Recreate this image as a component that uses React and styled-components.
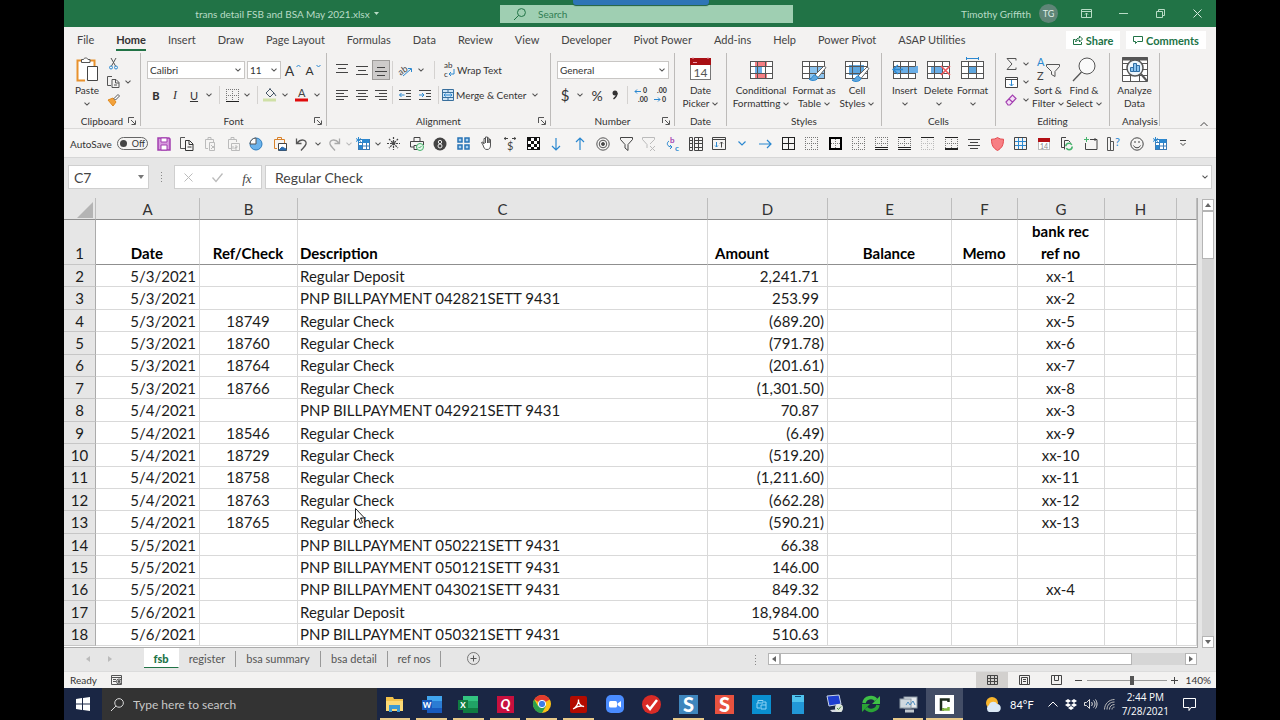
import React from "react";
import styled, { createGlobalStyle } from "styled-components";

const ui = 'Lato, "Open Sans", sans-serif';
const sheet = 'Lato, "Open Sans", sans-serif';

const Global = createGlobalStyle`
  * { box-sizing: border-box; }
  body { margin: 0; background: #000; font-family: ${ui}; color: #333; }
  button, input, select { font: inherit; color: inherit; margin: 0; padding: 0; border: 0; background: none; border-radius: 0; outline: 0; }
  svg { display: block; flex: none; overflow: visible; }
`;

const Screen = styled.div`
  height: 100vh;
  min-height: 640px;
  padding: 0 5%;
  background: #000;
`;
const Desktop = styled.div`
  height: 100%;
  display: flex;
  flex-direction: column;
  background: #e6e6e6;
  overflow: hidden;
  position: relative;
`;

/* ---------- title bar ---------- */
const TitleBar = styled.header`
  flex: none;
  height: 27px;
  display: grid;
  grid-template-columns: 436fr 293fr 423fr;
  align-items: center;
  background: #217346;
  color: #b9dcc6;
  font-size: 10px;
`;
const FileName = styled.div`
  display: flex;
  align-items: center;
  justify-content: center;
  gap: 4px;
  padding-left: 10px;
  white-space: nowrap;
`;
const SearchBox = styled.label`
  display: flex;
  align-items: center;
  gap: 12px;
  height: 18px;
  padding-left: 14px;
  background: #9fcfb2;
  color: #217346;
  input { flex: 1; min-width: 0; }
  input::placeholder { color: #2f7d53; opacity: 1; }
`;
const ShareTab = styled.div`
  position: absolute;
  top: 0;
  left: 50%;
  width: 136px;
  height: 5px;
  margin-left: -67px;
  background: #2e75b6;
  border-radius: 0 0 3px 3px;
  box-shadow: 0 1px 1px #1d5c3c;
`;
const Account = styled.div`
  display: flex;
  align-items: center;
  justify-content: flex-end;
`;
const Avatar = styled.span`
  width: 19px;
  height: 19px;
  margin: 0 10px 0 8px;
  border-radius: 50%;
  background: #5f8577;
  color: #dfeee6;
  font-size: 9px;
  line-height: 19px;
  text-align: center;
`;
const WindowButton = styled.button`
  width: 37px;
  height: 27px;
  display: flex;
  align-items: center;
  justify-content: center;
`;

/* ---------- ribbon ---------- */
const TabStrip = styled.nav`
  flex: none;
  height: 26px;
  display: flex;
  align-items: center;
  padding: 0 10px 0 13px;
  background: #f3f2f1;
  font-size: 11px;
`;
const Tabs = styled.div`
  display: flex;
  gap: 22px;
  flex: 1;
`;
const Tab = styled.button`
  height: 22px;
  white-space: nowrap;
  border-bottom: 2px solid ${(p) => (p.$on ? "#217346" : "transparent")};
  font-weight: ${(p) => (p.$on ? 700 : 400)};
  color: ${(p) => (p.$on ? "#333" : "#444")};
`;
const PillButton = styled.button`
  height: 18px;
  width: ${(p) => p.$w}px;
  margin-left: 6px;
  display: flex;
  align-items: center;
  justify-content: center;
  gap: 3px;
  background: #fff;
  color: #217346;
  font-weight: 700;
  font-size: 11px;
`;
const Ribbon = styled.section`
  flex: none;
  height: 76px;
  display: flex;
  background: #f3f2f1;
  border-bottom: 1px solid #dad9d8;
  font-size: 10px;
`;
const Group = styled.div`
  width: ${(p) => p.$w}px;
  height: 73px;
  flex: none;
  display: flex;
  flex-direction: column;
  border-right: 1px solid #bdbbb9;
`;
const GroupBody = styled.div`
  flex: 1;
  display: flex;
  padding: 2px ${(p) => p.$px || 0}px 0;
  justify-content: ${(p) => p.$justify || "flex-start"};
`;
const GroupFoot = styled.div`
  height: 12px;
  flex: none;
  display: grid;
  grid-template-columns: 12px 1fr 12px;
  align-items: center;
  text-align: center;
  font-size: 10px;
  line-height: 12px;
  margin-bottom: -1px;
  span { grid-column: 2; white-space: nowrap; justify-self: center; }
`;
const Rows = styled.div`
  display: flex;
  flex-direction: column;
  gap: 5px;
  padding-top: 5px;
`;
const ToolRow = styled.div`
  height: 20px;
  display: flex;
  align-items: center;
`;
const Tool = styled.button`
  width: ${(p) => (p.$w ? p.$w + "px" : "auto")};
  height: ${(p) => p.$h || 20}px;
  flex: none;
  display: flex;
  align-items: center;
  justify-content: center;
  gap: 2px;
  white-space: nowrap;
  background: ${(p) => (p.$on ? "#cdcbca" : "none")};
  box-shadow: ${(p) => (p.$on ? "inset 0 0 0 1px #9d9b99" : "none")};
`;
const Glyph = styled.span`
  font-size: ${(p) => p.$size || 12}px;
  font-weight: ${(p) => p.$weight || 400};
  font-style: ${(p) => (p.$italic ? "italic" : "normal")};
  text-decoration: ${(p) => (p.$under ? "underline" : "none")};
  font-family: ${(p) => (p.$serif ? '"Liberation Serif", serif' : "inherit")};
`;
const Rule = styled.span`
  width: 1px;
  height: 18px;
  background: #d4d2d0;
  flex: none;
  margin: 0 ${(p) => p.$m || 0}px;
`;
const Picker = styled.span`
  width: ${(p) => p.$w}px;
  height: 18px;
  margin-right: 2px;
  display: flex;
  align-items: center;
  background: #fff;
  border: 1px solid #c8c6c4;
  padding-right: 3px;
  flex: none;
  select { appearance: none; flex: 1; min-width: 0; padding-left: 2px; height: 16px; color: #333; }
`;
const BigTool = styled.button`
  width: ${(p) => p.$w}px;
  flex: none;
  display: flex;
  flex-direction: column;
  align-items: center;
  padding-top: 2px;
  line-height: 13px;
  white-space: nowrap;
  i { font-style: normal; display: flex; align-items: center; gap: 3px; height: 13px; }
  svg.art { height: 26px; margin-bottom: 1px; }
`;
const Stack = styled.div`
  display: flex;
  flex-direction: column;
  ${ToolRow} { height: 18px; }
`;
const Collapse = styled.button`
  margin: auto 8px 1px auto;
`;

/* ---------- quick access ---------- */
const QuickBar = styled.section`
  flex: none;
  height: 29px;
  display: flex;
  align-items: center;
  background: #f5f4f3;
  border-bottom: 1px solid #d6d6d6;
  padding: 1px 21px 0 6px;
`;
const AutoSave = styled.label`
  width: 82px;
  flex: none;
  display: flex;
  align-items: center;
  gap: 5px;
  font-size: 10px;
  white-space: nowrap;
`;
const Switch = styled.span`
  width: 31px;
  height: 13px;
  border: 1px solid #666;
  border-radius: 7px;
  display: flex;
  align-items: center;
  gap: 5px;
  padding-left: 2px;
  font-size: 9px;
  flex: none;
  input { appearance: none; width: 7px; height: 7px; border-radius: 50%; background: #444; }
`;
const QuickSet = styled.div`
  flex: ${(p) => p.$grow} 1 0;
  display: grid;
  grid-template-columns: repeat(${(p) => p.$n}, 1fr);
  justify-items: center;
`;
const QuickSplit = styled.div`
  width: 91px;
  flex: none;
  display: flex;
  align-items: center;
  gap: 2px;
  padding-left: 1px;
`;

/* ---------- formula bar ---------- */
const FormulaRow = styled.section`
  flex: none;
  display: flex;
  height: 40px;
  padding: 7px 4px 9px;
  color: #444;
`;
const NameBox = styled.div`
  width: 81px;
  flex: none;
  display: flex;
  align-items: center;
  padding: 0 5px;
  background: #fff;
  border: 1px solid #cfcfcf;
  font: 14px ${sheet};
  input { width: 64px; }
`;
const Dots = styled.div`
  width: ${(p) => p.$w}px;
  height: ${(p) => p.$h || 24}px;
  display: flex;
  flex-direction: column;
  align-items: center;
  justify-content: center;
  gap: 2px;
  i { width: 1px; height: 1px; background: #888; }
`;
const FxBox = styled.div`
  width: 88px;
  flex: none;
  margin-right: 3px;
  display: flex;
  align-items: center;
  justify-content: space-around;
  background: #fff;
  border: 1px solid #cfcfcf;
`;
const FormulaBox = styled.div`
  flex: 1;
  display: flex;
  align-items: center;
  padding: 0 3px 0 9px;
  background: #fff;
  border: 1px solid #cfcfcf;
  font: 14px ${sheet};
  input { flex: 1; }
`;

/* ---------- grid ---------- */
const SheetArea = styled.main`
  flex: 1;
  min-height: 0;
  display: flex;
  position: relative;
`;
const GridWrap = styled.div`
  flex: 1;
  min-width: 0;
  padding-bottom: 1px;
  background: #fff;
  border-right: 1px solid #ababab;
  border-bottom: 1px solid #ababab;
`;
const Grid = styled.table`
  width: 100%;
  height: 100%;
  table-layout: fixed;
  border-collapse: separate;
  border-spacing: 0;
  font: 15px/18px ${sheet};
  color: #1c1c1c;
  th, td { padding: 0 3px; border-right: 1px solid #d9d9d9; border-bottom: 1px solid #d9d9d9; white-space: nowrap; overflow: hidden; }
  th { font-weight: 400; }
`;
const HeadRow = styled.tr`
  height: 22px;
  th { background: #e6e6e6; border-color: #ababab #bdbdbd #8f8f8f; color: #333; }
`;
const TitleRow = styled.tr`
  height: 45px;
  td { font-weight: 700; color: #000; vertical-align: bottom; border-bottom-color: #8f8f8f; line-height: 22px; }
  th { vertical-align: bottom; line-height: 22px; }
`;
const RowHead = styled.th`
  background: #e6e6e6;
  border-right-color: #ababab !important;
  border-bottom-color: #c6c6c6 !important;
  text-align: center;
`;
const Cell = styled.td`
  text-align: ${(p) => p.$align || "left"};
  padding-right: ${(p) => (p.$positive ? 8 : 3)}px !important;
  padding-left: ${(p) => (p.$indent ? 7 : 2)}px !important;
`;
const Corner = styled.svg`
  margin: 2px 0 0 10px;
`;
const VScroll = styled.div`
  width: 18px;
  flex: none;
  padding: 1px 2px 0 4px;
  display: flex;
  flex-direction: column;
`;
const ScrollButton = styled.button`
  width: 12px;
  height: 12px;
  flex: none;
  display: flex;
  align-items: center;
  justify-content: center;
  background: #fff;
  border: 1px solid #b5b5b5;
`;
const Track = styled.div`
  flex: 1;
  background: #d6d6d6;
`;
const VThumb = styled.div`
  height: 48px;
  background: #fff;
  border: 1px solid #b5b5b5;
`;
const HThumb = styled.div`
  width: 87%;
  height: 12px;
  background: #fff;
  border: 1px solid #b5b5b5;
`;
const Pointer = styled.svg`
  position: absolute;
  left: 291px;
  top: 310px;
`;

/* ---------- sheet tabs and status ---------- */
const SheetTabs = styled.nav`
  flex: none;
  height: 23px;
  display: flex;
  align-items: flex-start;
  font-size: 11px;
`;
const NavArrows = styled.div`
  width: 80px;
  height: 22px;
  flex: none;
  display: flex;
  align-items: center;
  gap: 18px;
  padding-left: 22px;
`;
const SheetTab = styled.button`
  width: ${(p) => p.$w}px;
  height: ${(p) => (p.$on ? 20 : 16)}px;
  margin-top: ${(p) => (p.$on ? 0 : 3)}px;
  line-height: 16px;
  white-space: nowrap;
  color: ${(p) => (p.$on ? "#217346" : "#555")};
  font-weight: ${(p) => (p.$on ? 900 : 400)};
  background: ${(p) => (p.$on ? "#fff" : "none")};
  border-right: 1px solid ${(p) => (p.$plain ? "transparent" : "#999")};
  border-bottom: ${(p) => (p.$on ? "1px solid #217346" : "0")};
  padding-top: ${(p) => (p.$on ? 2 : 0)}px;
`;
const AddSheet = styled.button`
  margin: 4px 0 0 26px;
`;
const HScroll = styled.div`
  flex: 0 1 429px;
  display: flex;
  margin: 5px 19px 0 0;
`;
const StatusBar = styled.footer`
  flex: none;
  height: 17px;
  display: flex;
  align-items: center;
  background: #f3f2f1;
  border-top: 1px solid #dcdcdc;
  font-size: 10px;
  padding: 0 5px 0 6px;
`;
const MacroButton = styled.button`
  margin: 0 auto 0 14px;
`;
const ViewButton = styled.button`
  width: 32px;
  height: 16px;
  display: flex;
  align-items: center;
  justify-content: center;
  background: ${(p) => (p.$on ? "#d2d0ce" : "none")};
`;
const ZoomButton = styled.button`
  padding: 0 3px;
`;
const ZoomRange = styled.input`
  appearance: none;
  width: 80px;
  height: 12px;
  margin: 0 1px 0 2px;
  background: linear-gradient(#999, #999) center / 100% 1px no-repeat;
  &::-webkit-slider-thumb { appearance: none; width: 4px; height: 9px; background: #555; }
`;
const Percent = styled.span`
  width: 30px;
  text-align: right;
`;
const Spacer = styled.span`
  flex: 1;
`;

/* ---------- taskbar ---------- */
const Taskbar = styled.footer`
  flex: none;
  height: 32px;
  display: flex;
  background: #1a2644;
  color: #fff;
`;
const Start = styled.button`
  width: 38px;
  flex: none;
  display: flex;
  align-items: center;
  justify-content: center;
`;
const TaskSearch = styled.label`
  flex: 0 1 276px;
  display: flex;
  align-items: center;
  gap: 9px;
  padding-left: 9px;
  background: #333;
  color: #d0d0d0;
  font-size: 12px;
  input { flex: 1; min-width: 0; }
  input::placeholder { color: #c8c8c8; opacity: 1; }
`;
const Apps = styled.div`
  flex: 0 1 589px;
  display: grid;
  grid-template-columns: repeat(16, 1fr);
`;
const AppButton = styled.button`
  display: flex;
  align-items: center;
  justify-content: center;
  background: ${(p) => (p.$active ? "#434d66" : "none")};
  margin: 0 ${(p) => (p.$active ? 0 : 3)}px;
  box-shadow: ${(p) => (p.$open ? "inset 0 -2px #e8c98a" : "none")};
`;
const Tray = styled.div`
  flex: 1;
  display: flex;
  align-items: center;
  justify-content: flex-end;
  gap: 7px;
  padding: 0 20px 0 22px;
  font-size: 11px;
  white-space: nowrap;
`;
const Clock = styled.time`
  font: 10px/14px "Open Sans", sans-serif;
  text-align: center;
`;
const Notify = styled.button`
  margin-left: 7px;
`;

/* ---------- icons ---------- */
const K = "#555";
const B = "#2b88d0";
const Art = ({ w = 16, h = 16, big, children }) => (
  <svg className={big ? "art" : undefined} width={w} height={h} viewBox={`0 0 ${w} ${h}`} fill="none" stroke={K} strokeWidth="1" aria-hidden="true">
    {children}
  </svg>
);
const Chev = ({ color = K }) => (
  <Art w={6} h={4}><path d="M.5.7 3 3.1 5.5.7" stroke={color} strokeWidth="1.1" /></Art>
);
const Launcher = () => (
  <Art w={8} h={8}><path d="M.5 6V.5H6M3 3l4 4M7.500 3.500v4h-4" /></Art>
);
const Lines = ({ rows }) => (
  <Art w={12} h={12}>
    {rows.map(([x, y, x2], i) => <path key={i} d={`M${x} ${y}.5H${x2}`} stroke="#444" />)}
  </Art>
);
const Magnifier = ({ s = 12, color }) => (
  <Art w={s} h={s}>
    <circle cx={s * 0.62} cy={s * 0.38} r={s * 0.33} stroke={color} />
    <path d={`M${s * 0.38} ${s * 0.62} 0 ${s}`} stroke={color} />
  </Art>
);
const Indent = ({ right }) => (
  <Art w={12} h={12}>
    <path d="M0 1.500h12M7 4.500h5M7 7.500h5M0 10.500h12" stroke="#444" />
    <path d={right ? "M0 6h5M3 4l2 2-2 2" : "M.5 6h5M2.500 4l-2 2 2 2"} stroke={B} />
  </Art>
);
const Decimals = ({ more }) => (
  <Art w={13} h={14}>
    <g fill="#333" stroke="none" fontSize="7" fontWeight="700" fontFamily="Lato">
      <text x={more ? 8 : 3} y="5">{more ? "0" : ".00"}</text>
      <text x={more ? 3 : 8} y="14">{more ? ".00" : "0"}</text>
    </g>
    <path d={more ? "M0 3.500h6M2 1.500l-2 2 2 2" : "M0 11.500h6M4 9.500l2 2-2 2"} stroke={B} />
  </Art>
);
const Brush = ({ x, y }) => (
  <g transform={`translate(${x} ${y})`}>
    <path d="M15 0 6 9l3 2.500L17 1.500z" fill="#fff" stroke="#666" />
    <path d="M6 9c-3 0-2 4-6 4 3 3 9 1 9-1.500z" fill="#5ea6de" stroke={B} />
  </g>
);
const TableGrid = ({ w = 22, h = 17, y = 4, fill }) => (
  <g>
    <rect x=".5" y={y + 0.5} width={w} height={h} fill="#fff" />
    {fill}
    <path d={`M.5 ${y + 5}.5h${w}M.5 ${y + 12}.5h${w}M7.500 ${y}v${h}M15.500 ${y}v${h}`} />
  </g>
);
const BorderIcon = ({ solid, dash = "#777" }) => (
  <Art w={13} h={13}>
    <path d="M0 .500h13M0 6.500h13M0 12.500h13M.5 0v13M6.500 0v13M12.500 0v13" stroke={dash} strokeDasharray="1 1" />
    {solid && <path d={solid[0]} stroke={solid[2] || "#222"} strokeWidth={solid[1]} />}
  </Art>
);

const quickLeft = [
  ["Save", <Art w={14} h={14}><path d="M1 1h11l1 1v11H1z" stroke="#a33fb0" strokeWidth="1.500" fill="#d79ade" /><path d="M4 1h6v4H4zM4 13V8h6v5z" fill="#fff" stroke="#a33fb0" /></Art>],
  ["Copy", <Art w={14} h={14}><path d="M5 11.500H.5V.5H5" /><path d="M5.500 3.500h4l3.500 3.500v6.500H5.500zM9 3.500v4h4M7.500 10h4" stroke="#333" /></Art>],
  ["Paste formulas", <Art w={14} h={14}><path d="M5 11.500H2.500v-9h8V5M5 2.500v-2h3v2M6.500 5.500h5v8h-5zM8 8l4 4M12 8l-4 4" stroke="#bbb" /></Art>],
  ["Paste values", <Art w={14} h={14}><path d="M5 11.500H2.500v-9h8V5M5 2.500v-2h3v2M5.500 6.500h8v7h-8zM7 12V9M9 9h2v1.500H9V12h2" stroke="#bbb" /></Art>],
  ["Chart", <Art w={14} h={14}><circle cx="7" cy="7" r="6" fill="#6bb3ec" stroke="#2f7dbd" /><path d="M7 1v6H1a6 6 0 0 1 6-6z" fill="#fff" stroke="#555" /></Art>],
  ["Paste picture", <Art w={14} h={14}><path d="M4 11.500H1.500v-9h10V6M4.500 2.500v-2h4v2z" stroke="#d9822b" /><path d="M5.500 6.500h8v7h-8z" fill="#fff" stroke="#444" /><path d="M6 13l3-3 4 2v1z" fill="#2b6cb0" stroke="#2b6cb0" /></Art>],
];
const Undo = ({ flip, color }) => (
  <Art w={14} h={14}><g transform={flip ? "translate(14 0) scale(-1 1)" : undefined}><path d="M1.500 1.500v5h5M2 6c4-5 10-3 9 1-.5 2-3 4-5 6.500" stroke={color} strokeWidth="1.300" /></g></Art>
);
const BlueTable = () => (
  <Art w={14} h={13}>
    <rect x="2.500" y="2.500" width="11" height="10" fill="#fff" stroke="#3a7ab5" />
    <path d="M6.500 3v9M10.500 3v9M3 5.500h10M3 9h10" stroke="#3a7ab5" />
    <path d="M6 2h7v4H6zM3 8h3v4H3z" fill={B} stroke="none" /><path d="M2.500 0v6M0 1.500l5 3M5 1.500l-5 3" stroke={B} />
  </Art>
);
const quickRight = [
  ["Freeze", <Art w={13} h={13}><path d="M6.500 0v13M0 6.500h13M2 2l9 9M11 2l-9 9" strokeDasharray="2 1" strokeWidth="1.200" stroke="#444" /><circle cx="6.500" cy="6.500" r="1.500" fill="#444" /></Art>],
  ["Print", <Art w={14} h={14}><path d="M4 4V.5h6V4M4 10H.5V4.500h13V8M4 8.500h4v4H4z" stroke="#444" /><circle cx="10" cy="10" r="3.500" fill="#e6f6ea" stroke="#45b36b" /><path d="M8.500 10l1 1 2-2" stroke="#45b36b" /></Art>],
  ["Eight", <Art w={14} h={14}><circle cx="7" cy="7" r="6.500" fill="#444" stroke="none" /><circle cx="7" cy="5" r="1.700" stroke="#eee" /><circle cx="7" cy="9" r="2" stroke="#eee" /></Art>],
  ["Blocks", <Art w={13} h={13}><path d="M1 1h4v4H1zM8 1h4v4H8zM1 8h4v4H1zM8 8h4v4H8z" fill="#a9d2f2" stroke="#2773b5" strokeWidth="1.500" /></Art>],
  ["Hand", <Art w={13} h={15}><path d="M3 9 1.500 6.500 3 6l1 2V2.500h1.500V7 1h2v6-5h1.500v5V3.500h1.500V9c0 3-1 4.500-3.500 4.500S4 12 3 9z" fill="#fff" /></Art>],
  ["Currency swap", <Art w={14} h={14}><text x="4" y="13" fontSize="11" fill="#444" stroke="none" fontFamily="Lato">$</text><path d="M1 1.500h4M3 .5 1 1.500l2 1M9 1.500h4M11 .5l2 1-2 1" stroke="#444" /></Art>],
  ["Checker", <Art w={13} h={13}><rect x=".5" y=".5" width="12" height="12" fill="#fff" stroke="#111" /><path d="M1 1h3v3H1zM7 1h3v3H7zM4 4h3v3H4zM10 4h2v3h-2zM1 7h3v3H1zM7 7h3v3H7zM4 10h3v2H4zM10 10h2v2h-2z" fill="#111" stroke="none" /></Art>],
  ["Down", <Art w={10} h={14}><path d="M5 1v12M1 9l4 4 4-4" stroke={B} strokeWidth="1.200" /></Art>],
  ["Up", <Art w={10} h={14}><path d="M5 13V1M1 5l4-4 4 4" stroke={B} strokeWidth="1.200" /></Art>],
  ["Target", <Art w={14} h={14}><circle cx="7" cy="7" r="6.200" /><circle cx="7" cy="7" r="3.800" /><circle cx="7" cy="7" r="1.500" fill="#444" /></Art>],
  ["Filter", <Art w={13} h={14}><path d="M.5.5h12v2l-4.500 5v6L5 11V7.500l-4.500-5z" stroke="#444" /></Art>],
  ["Clear filter", <Art w={14} h={14}><path d="M.5.5h12v2L8 7M5 11V7.500l-4.500-5V.5M8 9l5 5M13 9l-5 5" stroke="#bbb" /></Art>],
  ["Replace", <Art w={14} h={14}><g fontSize="8" fontWeight="700" stroke="none" fontFamily="Lato"><text x="4" y="6" fill="#a33fb0">b</text><text x="9" y="14" fill={B}>c</text></g><path d="M3 4C0 6 1 10 6 10M4 8l2 2-2 2" stroke={B} /></Art>],
  ["Pivot", <Art w={14} h={14}><path d="M.5.500h3v13h-3zM5.500.500h8v13h-8zM9.500.500v13M5.500 3.500h8M5.500 6.500h8M5.500 10.500h8M1 3.500h2M1 6.500h2M1 10.500h2" stroke="#444" /></Art>],
  ["Sort window", <Art w={14} h={13}><path d="M.5.5h13v12H.5zM.5 2.500h13" stroke="#444" /><path d="M4.500 5v5M3 8.500l1.500 1.500L6 8.500" stroke={B} /><path d="M9.500 10.500V5M8 6.500 9.500 5 11 6.500" stroke="#444" /></Art>],
  ["Expand", <Art w={8} h={5}><path d="M.5.500 4 4 7.500.500" stroke={B} strokeWidth="1.200" /></Art>],
  ["Right", <Art w={13} h={10}><path d="M0 5h12M8 1l4 4-4 4" stroke={B} strokeWidth="1.200" /></Art>],
  ["All borders", <BorderIcon dash="none" solid={["M0 .500h13M0 6.500h13M0 12.500h13M.5 0v13M6.500 0v13M12.500 0v13", 1]} />],
  ["No border", <BorderIcon />],
  ["Thick box", <BorderIcon solid={["M1 1h11v11H1z", 2, "#000"]} />],
  ["Outside", <BorderIcon />],
  ["Bottom", <BorderIcon solid={["M0 12.500h13M0 10.500h13", 1]} />],
  ["Top and bottom", <BorderIcon solid={["M0 .500h13M0 12.500h13M0 10.500h13", 1]} />],
  ["Top", <BorderIcon dash="#bbb" solid={["M0 .500h13", 1]} />],
  ["Thick bottom", <BorderIcon solid={["M0 .500h13M0 12.500h13M0 11.500h13", 1]} />],
  ["Center", <Art w={12} h={12}><path d="M0 1.500h12M2 4.500h8M0 7.500h12M2 10.500h8" stroke="#444" /></Art>],
  ["Shield", <Art w={13} h={14}><path d="M6.500.5c2 1.500 4 1.700 6 1.700C12.500 8 11 11 6.500 13.500 2 11 .5 8 .5 2.200c2 0 4-.2 6-1.700z" fill="#f77f84" stroke="#e5484d" /></Art>],
  ["Grid", <Art w={13} h={13}><path d="M4.500 1v11M8.500 1v11M1 4.500h11M1 8.500h11" stroke={B} /><path d="M.5.500h12v12H.5z" stroke="#444" /></Art>],
  ["Calendar", <Art w={12} h={12}><rect x=".5" y=".5" width="11" height="11" fill="#fff" stroke="#bbb" /><path d="M0 2h12" stroke="#b30f14" strokeWidth="4" /><text x="2" y="11" fontSize="7" fill="#888" stroke="none" fontFamily="Lato">14</text></Art>],
  ["Refresh copy", <Art w={12} h={14}><path d="M3 10.500H.5v-10H5M3.500 12.500v-9h4l2 2" stroke="#444" /><circle cx="8" cy="9.500" r="3.200" stroke="#45b36b" strokeWidth="1.500" strokeDasharray="8 2" /></Art>],
  ["New window", <Art w={14} h={13}><path d="M6 2.500h7v10H1.500V6M11 1v3" stroke="#444" /><path d="M2.500 0v5M0 2.500h5" stroke="#45b36b" /></Art>],
  ["Chart help", <Art w={14} h={14}><path d="M.5.500h3v13h-3zM3.500 4.500h3v9h-3z" /><text x="8" y="9" fontSize="11" fill={B} stroke="none" fontFamily="Lato">?</text></Art>],
  ["Smile", <Art w={14} h={14}><circle cx="7" cy="7" r="6.200" stroke="#444" /><path d="M3.500 8.500c1.500 3 5.500 3 7 0M5 4v2M9 4v2" stroke="#444" /></Art>],
  ["Table tools", <BlueTable />],
  ["More", <Art w={8} h={7}><path d="M1 .5h6M1.500 3 4 5.500 6.500 3" stroke="#444" /></Art>],
];

const Tile = ({ fill, children }) => (
  <Art w={19} h={19}><rect width="19" height="19" fill={fill} stroke="none" />{children}</Art>
);
const Letter = ({ children, size = 16, x = 9.5, y = 15, fill = "#fff", italic }) => (
  <text x={x} y={y} fontSize={size} fontWeight="900" fontStyle={italic ? "italic" : undefined} textAnchor="middle" fill={fill} stroke="none" fontFamily="Lato">{children}</text>
);
const Office = ({ a, b, c, letter }) => (
  <Art w={20} h={17}>
    <rect x="5" width="15" height="17" fill={b} stroke="none" /><path d="M5 0h15v5H5z" fill={a} stroke="none" />
    <path d="M5 12h15v5H5z" fill={c} stroke="none" /><rect y="4" width="10" height="10" fill={c} stroke="none" />
    <Letter size={8} x={5} y={12}>{letter}</Letter>
  </Art>
);
const apps = [
  ["File Explorer", 1, <Art w={18} h={16}><path d="M0 1h7l1 2h9v12H0z" fill="#f2c14b" stroke="none" /><path d="M0 5h17v10H0z" fill="#fbd976" stroke="none" /><path d="M3 16V9h11v7h-3v-3H6v3z" fill="#3c9ad4" stroke="none" /></Art>],
  ["Word", 1, <Office a="#41a5ee" b="#2b7cd3" c="#185abd" letter="W" />],
  ["Excel", 1, <Office a="#33c481" b="#21a366" c="#107c41" letter="X" />],
  ["Quicken", 1, <Art w={17} h={17}><rect width="17" height="17" fill="#c8103e" stroke="none" /><Letter size={13} x={8.500} y={13} italic>Q</Letter></Art>],
  ["Chrome", 1, <Art w={18} h={18}><circle cx="9" cy="9" r="9" fill="#fbc116" stroke="none" /><path d="M9 9 1.200 4.500A9 9 0 0 1 16.800 4.500z" fill="#e33b2e" stroke="none" /><path d="M1.200 4.500A9 9 0 0 0 9 18l4-7H5z" fill="#2c9f4b" stroke="none" /><path d="M9 5h7.800l-.5-1H9z" fill="#e33b2e" stroke="none" /><circle cx="9" cy="9" r="3.700" fill="#3d7de8" stroke="#fff" /></Art>],
  ["Acrobat", 1, <Art w={17} h={17}><rect width="17" height="17" rx="2" fill="#b30b00" stroke="none" /><path d="M3 13c3-1 6-6 5.500-9.500C8 7 11 10.500 14 10.500c-3-1-7 0-10 2" stroke="#fff" strokeWidth="1.300" /></Art>],
  ["Zoom", 0, <Art w={18} h={18}><rect width="18" height="18" rx="5" fill="#4a8cff" stroke="none" /><rect x="3" y="6" width="8" height="6.500" rx="1.500" fill="#fff" stroke="none" /><path d="M11.500 8.500 15 6v6.500l-3.500-2.500z" fill="#fff" stroke="none" /></Art>],
  ["Tasks", 0, <Art w={19} h={19}><circle cx="9.500" cy="9.500" r="9.500" fill="#d92b26" stroke="none" /><path d="M4.500 10 8 14l7-9" stroke="#fff" strokeWidth="2.500" /></Art>],
  ["Snagit", 1, <Tile fill="#3f86bd"><Letter size={20} y={17}>S</Letter></Tile>],
  ["Snagit Editor", 0, <Tile fill="#e8523f"><Letter size={20} y={17}>S</Letter></Tile>],
  ["Scanner", 0, <Tile fill="#0a8fd0"><path d="M5 8h6M6 8V5.500h5V8M5 8v5h3M9 10h5v4H9zM12 7h2v3" stroke="#8fd3f5" /></Tile>],
  ["Phone", 0, <Art w={12} h={19}><rect width="12" height="19" fill="#2298d8" stroke="none" /><path d="M0 0h12v7H0z" fill="#4fc3ee" stroke="none" /><path d="M3 1.500h6" stroke="#0b4f80" /></Art>],
  ["Remote PC", 0, <Art w={18} h={18}><path d="M1 1l12-1 2 9-12 2z" fill="#1f3fd0" stroke="#c8d4e8" /><path d="M4 15l10-1 2 3H6z" fill="#d5d9e2" stroke="none" /><circle cx="13" cy="13" r="4" fill="#dfe7dd" stroke="none" /><path d="M11 13l1.500 1.500L15 11.500" stroke="#4a8a3c" /></Art>],
  ["Sync", 0, <Art w={20} h={18}><path d="M3 8C4 2 12 1 15 5" stroke="#3fc046" strokeWidth="3.500" /><path d="M19 1v8h-8z" fill="#3fc046" stroke="none" /><path d="M17 10c-1 6-9 7-12 3" stroke="#2aa336" strokeWidth="3.500" /><path d="M1 17V9h8z" fill="#2aa336" stroke="none" /></Art>],
  ["Monitor", 1, <Art w={19} h={17}><rect x="5" y="1" width="13" height="11" fill="#e5eaee" stroke="#8d9aa5" /><rect x="1" y="3" width="11" height="9" fill="#cfd8df" stroke="#8d9aa5" /><path d="M7 9l2-3 2 3 3-4 2 4" stroke="#4c8dc0" /><path d="M6 15h9" stroke="#c0c7cd" strokeWidth="3" /></Art>],
  ["Camtasia", 2, <Tile fill="#fff"><path d="M13.500 7V4.500H6v10h3" stroke="#1d2b1c" strokeWidth="2.500" /><path d="M7 14.500h6.500V12" stroke="#82b940" strokeWidth="2.500" /></Tile>],
];

const data = [
  ["5/3/2021", "", "Regular Deposit", "2,241.71", "xx-1"],
  ["5/3/2021", "", "PNP BILLPAYMENT 042821SETT 9431", "253.99", "xx-2"],
  ["5/3/2021", "18749", "Regular Check", "(689.20)", "xx-5"],
  ["5/3/2021", "18760", "Regular Check", "(791.78)", "xx-6"],
  ["5/3/2021", "18764", "Regular Check", "(201.61)", "xx-7"],
  ["5/3/2021", "18766", "Regular Check", "(1,301.50)", "xx-8"],
  ["5/4/2021", "", "PNP BILLPAYMENT 042921SETT 9431", "70.87", "xx-3"],
  ["5/4/2021", "18546", "Regular Check", "(6.49)", "xx-9"],
  ["5/4/2021", "18729", "Regular Check", "(519.20)", "xx-10"],
  ["5/4/2021", "18758", "Regular Check", "(1,211.60)", "xx-11"],
  ["5/4/2021", "18763", "Regular Check", "(662.28)", "xx-12"],
  ["5/4/2021", "18765", "Regular Check", "(590.21)", "xx-13"],
  ["5/5/2021", "", "PNP BILLPAYMENT 050221SETT 9431", "66.38", ""],
  ["5/5/2021", "", "PNP BILLPAYMENT 050121SETT 9431", "146.00", ""],
  ["5/5/2021", "", "PNP BILLPAYMENT 043021SETT 9431", "849.32", "xx-4"],
  ["5/6/2021", "", "Regular Deposit", "18,984.00", ""],
  ["5/6/2021", "", "PNP BILLPAYMENT 050321SETT 9431", "510.63", ""],
];
const tabs = ["File", "Home", "Insert", "Draw", "Page Layout", "Formulas", "Data", "Review", "View", "Developer", "Pivot Power", "Add-ins", "Help", "Power Pivot", "ASAP Utilities"];

const RibbonGroup = ({ w, name, launcher, px, justify, children }) => (
  <Group $w={w}>
    <GroupBody $px={px} $justify={justify}>{children}</GroupBody>
    <GroupFoot><span>{name}</span>{launcher && <Launcher />}</GroupFoot>
  </Group>
);
const Big = ({ w, art, top, bottom, chev = true }) => (
  <BigTool $w={w}>{art}<i>{top}</i><i>{bottom}{chev && <Chev />}</i></BigTool>
);
const ChevTool = ({ w = 14, label }) => <Tool $w={w} aria-label={label}><Chev /></Tool>;

export default function App() {
  return (
    <Screen>
      <Global />
      <Desktop>
        <TitleBar>
          <FileName>trans detail FSB and BSA May 2021.xlsx <Art w={5} h={3}><path d="M0 0h5L2.500 3z" fill="#b9dcc6" stroke="none" /></Art></FileName>
          <SearchBox><Magnifier color="#217346" /><input aria-label="Search" placeholder="Search" /></SearchBox>
          <Account>
            Timothy Griffith<Avatar>TG</Avatar>
            <WindowButton aria-label="Ribbon display"><Art w={11} h={9}><path d="M.5.500h10v8H.5zM.5 2.500h10M5.500 8V4M4 5.500 5.500 4 7 5.500" stroke="#b9dcc6" /></Art></WindowButton>
            <WindowButton aria-label="Minimize"><Art w={9} h={9}><path d="M0 4.500h9" stroke="#b9dcc6" /></Art></WindowButton>
            <WindowButton aria-label="Restore"><Art w={9} h={9}><path d="M.5 2.500h6v6h-6zM2.500 2V.500h6v6H7" stroke="#b9dcc6" /></Art></WindowButton>
            <WindowButton aria-label="Close"><Art w={9} h={9}><path d="M.5.500l8 8M8.500.500l-8 8" stroke="#d6ecdf" /></Art></WindowButton>
          </Account>
        </TitleBar>
        <ShareTab />

        <TabStrip>
          <Tabs>{tabs.map((t) => <Tab key={t} $on={t === "Home"}>{t}</Tab>)}</Tabs>
          <PillButton $w={54}><Art w={10} h={10}><path d="M2.500 4.500h-2v5h8V7M2.500 7c.5-3 2-4 4-4V1l3 3-3 3V5c-2 0-3 .5-4 2z" stroke="#217346" /></Art>Share</PillButton>
          <PillButton $w={80}><Art w={10} h={10}><path d="M.5 1.500h9v5h-5l-2 2v-2h-2z" stroke="#217346" /></Art>Comments</PillButton>
        </TabStrip>

        <Ribbon>
          <RibbonGroup w={77} name="Clipboard" launcher px={6}>
            <Big w={34} top="Paste" bottom="" art={
              <Art w={24} h={26} big><path d="M10 23.500H2.500v-20h17V10" stroke="#e8912d" strokeWidth="2" fill="#fff" /><path d="M6.500 5.500v-3h2c.5-2 4-2 4.500 0h2v3z" fill="#fff" /><path d="M12.500 9.500h10v14h-10z" fill="#fff" stroke="#444" /></Art>} />
            <Stack>
              <ToolRow><Tool $w={18} $h={18} aria-label="Cut"><Art w={9} h={12}><path d="M2 0l4.500 8M7 0 2.500 8" /><circle cx="2" cy="9.500" r="1.500" stroke={B} /><circle cx="7" cy="9.500" r="1.500" stroke={B} /></Art></Tool></ToolRow>
              <ToolRow><Tool $w={18} $h={18} aria-label="Copy"><Art w={13} h={12}><path d="M4 9.500H.500v-9H5M5 3.500h4l3 3v5H5zM8.500 3.500v3.500h3.500M7 9h3" /></Art></Tool><ChevTool w={12} label="Copy options" /></ToolRow>
              <ToolRow><Tool $w={18} $h={18} aria-label="Format painter"><Art w={13} h={12}><path d="M1 6l5-2 3 4-3 4z" fill="#f2a23c" stroke="#e08a1e" /><path d="M7 4.500 11 .500l1.500 1.500-4 4z" fill="#fff" /></Art></Tool></ToolRow>
            </Stack>
          </RibbonGroup>

          <RibbonGroup w={186} name="Font" launcher px={6}>
            <Rows>
              <ToolRow>
                <Picker $w={98}><select aria-label="Font"><option>Calibri</option></select><Chev /></Picker>
                <Picker $w={34}><select aria-label="Font size"><option>11</option></select><Chev /></Picker>
                <Tool $w={20} aria-label="Grow font"><Glyph $size={14}>A</Glyph><Art w={5} h={12}><path d="M.5 3 2.500 1l2 2" stroke={B} /></Art></Tool>
                <Tool $w={20} aria-label="Shrink font"><Glyph $size={12}>A</Glyph><Art w={5} h={12}><path d="M.5 1l2 2 2-2" stroke={B} /></Art></Tool>
              </ToolRow>
              <ToolRow>
                <Tool $w={18}><Glyph $size={11} $weight={900}>B</Glyph></Tool>
                <Tool $w={20}><Glyph $size={12} $italic $serif>I</Glyph></Tool>
                <Tool $w={18}><Glyph $size={11} $under>U</Glyph></Tool>
                <ChevTool w={12} label="Underline options" />
                <Rule $m={4} />
                <Tool $w={16} aria-label="Borders"><BorderIcon solid={["M0 12.500h13", 1]} /></Tool><ChevTool label="Border options" />
                <Rule $m={3} />
                <Tool $w={18} aria-label="Fill color"><Art w={14} h={14}><path d="M3 5l4-4 4 4-4 4zM7 2V0M11 5l2 3" stroke="#456" /><path d="M0 12h13" stroke="#cfe0a6" strokeWidth="3" /></Art></Tool><ChevTool w={12} label="Fill options" />
                <Tool $w={20} aria-label="Font color"><Art w={13} h={14}><text x="3" y="9" fontSize="11" fill="#444" stroke="none" fontFamily="Lato">A</text><path d="M0 12h13" stroke="#e00b0b" strokeWidth="3" /></Art></Tool><ChevTool w={12} label="Font color options" />
              </ToolRow>
            </Rows>
          </RibbonGroup>

          <RibbonGroup w={224} name="Alignment" launcher px={5}>
            <Rows>
              <ToolRow>
                <Tool $w={20} aria-label="Top align"><Lines rows={[[0, 0, 12], [2, 4, 10], [0, 8, 12]]} /></Tool>
                <Tool $w={20} aria-label="Middle align"><Lines rows={[[0, 2, 12], [2, 6, 10], [0, 10, 12]]} /></Tool>
                <Tool $w={18} $on aria-label="Bottom align"><Lines rows={[[2, 3, 10], [0, 7, 12], [2, 11, 10]]} /></Tool>
                <Rule $m={2} />
                <Tool $w={20} aria-label="Orientation"><Art w={13} h={13}><text x="0" y="9" fontSize="9" fill="#444" stroke="none" transform="rotate(-35 5 8)" fontFamily="Lato">ab</text><path d="M4 12l8-7M9 4.500l3.500 0v3.500" stroke={B} /></Art></Tool>
                <ChevTool w={12} label="Orientation options" />
                <Rule $m={7} />
                <Tool><Art w={13} h={14}><g fontSize="8" fill="#333" stroke="none" fontFamily="Lato"><text x="2" y="5">ab</text><text x="2" y="14">c</text></g><path d="M12 6v5H7M9 9l-2 2 2 2" stroke={B} /></Art>Wrap Text</Tool>
              </ToolRow>
              <ToolRow>
                <Tool $w={20} aria-label="Align left"><Lines rows={[[0, 1, 12], [0, 4, 8], [0, 7, 12], [0, 10, 8]]} /></Tool>
                <Tool $w={20} aria-label="Align center"><Lines rows={[[0, 1, 12], [2, 4, 10], [0, 7, 12], [2, 10, 10]]} /></Tool>
                <Tool $w={18} aria-label="Align right"><Lines rows={[[0, 1, 12], [4, 4, 12], [0, 7, 12], [4, 10, 12]]} /></Tool>
                <Rule $m={2} />
                <Tool $w={20} aria-label="Decrease indent"><Indent /></Tool>
                <Tool $w={20} aria-label="Increase indent"><Indent right /></Tool>
                <Rule $m={3} />
                <Tool><Art w={12} h={12}><path d="M.5.500h11v11H.5zM.5 3.500h11M.5 8.500h11M6 .500v3M6 8.500v3" fill="#cfe5f7" stroke="#386f9c" /><path d="M2 6h8M3.500 4.500 2 6l1.500 1.500M8.500 4.500 10 6 8.500 7.500" stroke={B} /></Art>Merge &amp; Center</Tool>
                <ChevTool w={18} label="Merge options" />
              </ToolRow>
            </Rows>
          </RibbonGroup>

          <RibbonGroup w={124} name="Number" launcher px={6}>
            <Rows>
              <ToolRow><Picker $w={112}><select aria-label="Number format"><option>General</option></select><Chev /></Picker></ToolRow>
              <ToolRow>
                <Tool $w={16}><Glyph $size={15}>$</Glyph></Tool><ChevTool label="Currency options" />
                <Tool $w={20}><Glyph $size={14}>%</Glyph></Tool>
                <Tool $w={16} aria-label="Comma style"><Art w={8} h={12}><circle cx="4" cy="4" r="2.500" fill="#333" stroke="none" /><path d="M6 4c0 3-1 4-3.500 6" stroke="#333" strokeWidth="1.500" /></Art></Tool>
                <Rule $m={4} />
                <Tool $w={18} aria-label="Increase decimal"><Decimals more /></Tool>
                <Tool $w={20} aria-label="Decrease decimal"><Decimals /></Tool>
              </ToolRow>
            </Rows>
          </RibbonGroup>

          <RibbonGroup w={52} name="Date" justify="center">
            <Big w={44} top="Date" bottom="Picker" art={
              <Art w={21} h={26} big><rect x=".5" y="1.500" width="20" height="21" fill="#fff" stroke="#777" /><path d="M0 4.500h21" stroke="#a80f14" strokeWidth="7" /><path d="M3 0v2M18 0v2M3 5.500h4" stroke="#e9a" /><text x="10.500" y="20" textAnchor="middle" fontSize="12" fill="#555" stroke="none" fontFamily="Lato">14</text></Art>} />
          </RibbonGroup>

          <RibbonGroup w={155} name="Styles" justify="center">
            <Big w={60} top="Conditional" bottom="Formatting" art={
              <Art w={23} h={26} big><TableGrid fill={<><path d="M5 5h12v5H5zM5 16h12v5H5z" fill="#f67f84" stroke="none" /><path d="M5 10h7v6H5z" fill="#6aaee6" stroke="none" /></>} /></Art>} />
            <Big w={46} top="Format as" bottom="Table" art={
              <Art w={24} h={26} big><TableGrid fill={<path d="M8 10h14v11H8z" fill="#8cc4f0" stroke="none" />} /><Brush x={7} y={9} /></Art>} />
            <Big w={40} top="Cell" bottom="Styles" art={
              <Art w={24} h={26} big><TableGrid fill={<path d="M4 8h15v10H4z" fill="#5ea6de" stroke="none" />} /><Brush x={7} y={10} /></Art>} />
          </RibbonGroup>

          <RibbonGroup w={114} name="Cells" justify="center">
            <Big w={34} top="Insert" bottom="" art={
              <Art w={24} h={26} big><TableGrid fill={<path d="M1 9h24v7H1z" fill="#6aaee6" stroke="none" />} /><path d="M10 12.500H0M5 8l-5 4.500L5 17" stroke={B} strokeWidth="1.300" /></Art>} />
            <Big w={34} top="Delete" bottom="" art={
              <Art w={24} h={26} big><TableGrid fill={<path d="M4 9h12v7H4z" fill="#6aaee6" stroke="none" />} /><path d="M14 9l9 9M23 9l-9 9" stroke="#f0575c" strokeWidth="1.600" /></Art>} />
            <Big w={34} top="Format" bottom="" art={
              <Art w={23} h={26} big><TableGrid fill={<path d="M8 10h7v6H8z" fill="#5ea6de" stroke="none" />} /><path d="M5 1.500h13M5.500 0v3M17.500 0v3" stroke={B} /></Art>} />
          </RibbonGroup>

          <RibbonGroup w={114} name="Editing" px={4}>
            <Stack>
              <ToolRow><Tool $w={22} $h={18} aria-label="AutoSum"><Art w={11} h={12}><path d="M10 2.500V.500H1L6 6 1 11.500h9v-2" /></Art></Tool><ChevTool w={8} label="Sum options" /></ToolRow>
              <ToolRow><Tool $w={22} $h={18} aria-label="Fill"><Art w={13} h={11}><path d="M.5.500h12v10H.5zM.5 2.500h12" fill="#fff" stroke="#444" /><path d="M6.500 3v6M4.500 7l2 2 2-2" stroke={B} /></Art></Tool><ChevTool w={8} label="Fill options" /></ToolRow>
              <ToolRow><Tool $w={22} $h={18} aria-label="Clear"><Art w={12} h={12}><path d="M1 8l6.500-7L11 4.500 5 11H3zM4 5l4 3.500" stroke="#a33fb0" fill="#f4dff6" strokeWidth="1.200" /></Art></Tool><ChevTool w={8} label="Clear options" /></ToolRow>
            </Stack>
            <Big w={36} top="Sort &amp;" bottom="Filter" art={
              <Art w={24} h={26} big><g fontSize="11" stroke="none" fontFamily="Lato"><text x="1" y="9" fill={B}>A</text><text x="1" y="23" fill="#444">Z</text></g><path d="M10.500 7.500h13v2l-4.500 5v5l-3.500-2v-3l-5-5z" /></Art>} />
            <Big w={36} top="Find &amp;" bottom="Select" art={
              <Art w={24} h={26} big><circle cx="15" cy="9" r="8" fill="#fafafa" /><path d="M9.500 15 1 24" strokeWidth="1.300" /></Art>} />
          </RibbonGroup>

          <RibbonGroup w={50} name="Analysis" justify="center">
            <Big w={44} top="Analyze" bottom="Data" chev={false} art={
              <Art w={26} h={26} big><path d="M.5.500h25v24H.5zM.5 6.500h25M.5 12.500h25M.5 18.500h25M8.500.500v24M17.500.500v24" fill="#fff" /><path d="M0 2h26" strokeWidth="3" /><circle cx="13" cy="11" r="8" fill="#eef6fc" stroke="#555" strokeWidth="1.500" /><path d="M19 17l6 7" strokeWidth="2" /><path d="M8.500 10.500h3v4h-3zM11.500 6.500h3v8h-3zM14.500 8.500h3v6h-3z" fill="#8cc4f0" stroke="#2f6ea5" /></Art>} />
          </RibbonGroup>
          <Collapse aria-label="Collapse ribbon"><Art w={8} h={6}><path d="M.5 5 4 1.500 7.500 5" stroke="#444" /></Art></Collapse>
        </Ribbon>

        <QuickBar>
          <AutoSave>AutoSave<Switch><input type="checkbox" />Off</Switch></AutoSave>
          <QuickSet $n={6} $grow={6}>{quickLeft.map(([n, i]) => <Tool key={n} aria-label={n}>{i}</Tool>)}</QuickSet>
          <QuickSplit>
            <Tool $w={20} aria-label="Undo"><Undo color="#555" /></Tool><ChevTool w={8} label="Undo options" />
            <Tool $w={20} aria-label="Redo"><Undo flip color="#aaa" /></Tool><Chev color="#bbb" />
            <Tool $w={18} aria-label="Table"><BlueTable /></Tool><ChevTool w={8} label="Table options" />
          </QuickSplit>
          <QuickSet $n={35} $grow={35}>{quickRight.map(([n, i]) => <Tool key={n} aria-label={n}>{i}</Tool>)}</QuickSet>
        </QuickBar>

        <FormulaRow>
          <NameBox><input aria-label="Name box" defaultValue="C7" /><Art w={6} h={4}><path d="M0 0h6L3 4z" fill="#777" stroke="none" /></Art></NameBox>
          <Dots $w={25}><i /><i /><i /><i /></Dots>
          <FxBox>
            <button aria-label="Cancel"><Art w={9} h={9}><path d="M.5.500l8 8M8.500.500l-8 8" stroke="#bbb" /></Art></button>
            <button aria-label="Enter"><Art w={11} h={9}><path d="M.5 4.500l3.500 4 6.500-8" stroke="#bbb" strokeWidth="1.300" /></Art></button>
            <button><Glyph $size={13} $italic $serif>fx</Glyph></button>
          </FxBox>
          <FormulaBox><input aria-label="Formula" defaultValue="Regular Check" /><Chev /></FormulaBox>
        </FormulaRow>

        <SheetArea>
          <GridWrap>
            <Grid>
              <colgroup>
                <col style={{ width: 32 }} /><col style={{ width: 104 }} /><col style={{ width: 98 }} /><col />
                <col style={{ width: 120 }} /><col style={{ width: 124 }} /><col style={{ width: 66 }} />
                <col style={{ width: 87 }} /><col style={{ width: 72 }} /><col style={{ width: 20 }} />
              </colgroup>
              <thead>
                <HeadRow>
                  <th><Corner width="16" height="16" viewBox="0 0 16 16"><path d="M16 0v16H0z" fill="#b4b4b4" /></Corner></th>
                  {["A", "B", "C", "D", "E", "F", "G", "H", ""].map((c, i) => <th key={i}>{c}</th>)}
                </HeadRow>
              </thead>
              <tbody>
                <TitleRow>
                  <RowHead>1</RowHead>
                  <Cell $align="center">Date</Cell><Cell $align="center">Ref/Check</Cell><Cell>Description</Cell>
                  <Cell $indent>Amount</Cell><Cell $align="center">Balance</Cell><Cell $align="center">Memo</Cell>
                  <Cell $align="center">bank rec<br />ref no</Cell><Cell /><Cell />
                </TitleRow>
                {data.map(([d, r, t, a, x], i) => (
                  <tr key={i}>
                    <RowHead>{i + 2}</RowHead>
                    <Cell $align="right">{d}</Cell><Cell $align="center">{r}</Cell><Cell>{t}</Cell>
                    <Cell $align="right" $positive={a[0] !== "("}>{a}</Cell><Cell /><Cell />
                    <Cell $align="center">{x}</Cell><Cell /><Cell />
                  </tr>
                ))}
              </tbody>
            </Grid>
          </GridWrap>
          <VScroll>
            <ScrollButton aria-label="Scroll up"><Art w={6} h={4}><path d="M0 4h6L3 0z" fill="#666" stroke="none" /></Art></ScrollButton>
            <Track><VThumb /></Track>
            <ScrollButton aria-label="Scroll down"><Art w={6} h={4}><path d="M0 0h6L3 4z" fill="#666" stroke="none" /></Art></ScrollButton>
          </VScroll>
          <Pointer width="11" height="17" viewBox="0 0 11 17"><path d="M.5.500v12.500l3-2.500 2 5 2-1-2-4.500h4z" fill="#fff" stroke="#222" /></Pointer>
        </SheetArea>

        <SheetTabs>
          <NavArrows>
            <Art w={4} h={6}><path d="M4 0v6L0 3z" fill="#bbb" stroke="none" /></Art>
            <Art w={4} h={6}><path d="M0 0v6l4-3z" fill="#bbb" stroke="none" /></Art>
          </NavArrows>
          <SheetTab $w={35} $on $plain>fsb</SheetTab>
          <SheetTab $w={57}>register</SheetTab>
          <SheetTab $w={85}>bsa summary</SheetTab>
          <SheetTab $w={67}>bsa detail</SheetTab>
          <SheetTab $w={53}>ref nos</SheetTab>
          <AddSheet aria-label="New sheet"><Art w={13} h={13}><circle cx="6.500" cy="6.500" r="6" stroke="#777" /><path d="M3.500 6.500h6M6.500 3.500v6" /></Art></AddSheet>
          <Spacer />
          <Dots $w={25}><i /><i /><i /><i /></Dots>
          <HScroll>
            <ScrollButton aria-label="Scroll left"><Art w={4} h={6}><path d="M4 0v6L0 3z" fill="#666" stroke="none" /></Art></ScrollButton>
            <Track><HThumb /></Track>
            <ScrollButton aria-label="Scroll right"><Art w={4} h={6}><path d="M0 0v6l4-3z" fill="#666" stroke="none" /></Art></ScrollButton>
          </HScroll>
        </SheetTabs>

        <StatusBar>
          <span>Ready</span>
          <MacroButton aria-label="Record macro"><Art w={12} h={10}><path d="M.5.500h10v9H.5zM.5 2.500h10M2 4.500h3M2 6.500h3" /><circle cx="8" cy="6.500" r="2.500" fill="#f3f2f1" /><circle cx="8" cy="6.500" r="1" fill="#444" /></Art></MacroButton>
          <ViewButton $on aria-label="Normal view"><Art w={11} h={10}><path d="M.5.500h10v9H.5zM.5 3.500h10M.5 6.500h10M3.500.500v9M7.500.500v9" stroke="#444" /></Art></ViewButton>
          <ViewButton aria-label="Page layout view"><Art w={11} h={10}><path d="M.5.500h10v9H.5zM2.500 2.500h6v7h-6zM4 4.500h3M4 6.500h3" stroke="#444" /></Art></ViewButton>
          <ViewButton aria-label="Page break view"><Art w={11} h={10}><path d="M.5.500h10v9H.5zM3.500.500v5M7.500.500v5M3.500 5.500h4" stroke="#444" /></Art></ViewButton>
          <ZoomButton aria-label="Zoom out"><Art w={7} h={7}><path d="M0 3.500h7" stroke="#444" /></Art></ZoomButton>
          <ZoomRange type="range" aria-label="Zoom" min="0" max="100" defaultValue="56" />
          <ZoomButton aria-label="Zoom in"><Art w={7} h={7}><path d="M0 3.500h7M3.500 0v7" stroke="#444" /></Art></ZoomButton>
          <Percent>140%</Percent>
        </StatusBar>

        <Taskbar>
          <Start aria-label="Start"><Art w={14} h={14}><path d="M0 2l6-1v5.500H0zM7 1l7-1v6.500H7zM0 7.500h6V13l-6-1zM7 7.500h7V14l-7-1z" fill="#fff" stroke="none" /></Art></Start>
          <TaskSearch><Magnifier s={13} color="#ddd" /><input aria-label="Type here to search" placeholder="Type here to search" /></TaskSearch>
          <Apps>{apps.map(([n, s, i]) => <AppButton key={n} aria-label={n} $open={s > 0} $active={s === 2}>{i}</AppButton>)}</Apps>
          <Tray>
            <Art w={18} h={17}><circle cx="7" cy="7" r="6" fill="#f9b52c" stroke="none" /><path d="M4 16a4 4 0 0 1 0-7c1-4 7-4 8-1 5 0 5 8 0 8z" fill="#dbe9f6" stroke="none" /></Art>
            <span>84°F</span>
            <Spacer />
            <Art w={10} h={6}><path d="M.5 5.500 5 1l4.500 4.500" stroke="#fff" /></Art>
            <Art w={12} h={11}><path d="M3 0l3 2-3 2-3-2zM9 0l3 2-3 2-3-2zM3 4l3 2-3 2-3-2zM9 4l3 2-3 2-3-2zM6 7l3 2-3 2-3-2z" fill="#fff" stroke="none" /></Art>
            <Art w={13} h={10}><path d="M.5 3.500h2l3-3v9l-3-3h-2zM7.500 3c1 1 1 3 0 4M9.500 1.500c2 2 2 5 0 7M11.500.500c2 3 2 6 0 9" stroke="#ddd" /></Art>
            <Art w={11} h={11}><path d="M.5 10.500C.5 5 5 .500 10.500.500M3 10.500C3 6 6 3 10.500 3M5.500 10.500c0-3 2-5 5-5M8 10.500c0-1.500 1-2.500 2.500-2.500" stroke="#bbb" /></Art>
            <Clock>2:44 PM<br />7/28/2021</Clock>
            <Notify aria-label="Notifications"><Art w={13} h={13}><path d="M.5.500h12v9H8l-2 3v-3H.5z" stroke="#fff" /></Art></Notify>
          </Tray>
        </Taskbar>
      </Desktop>
    </Screen>
  );
}
